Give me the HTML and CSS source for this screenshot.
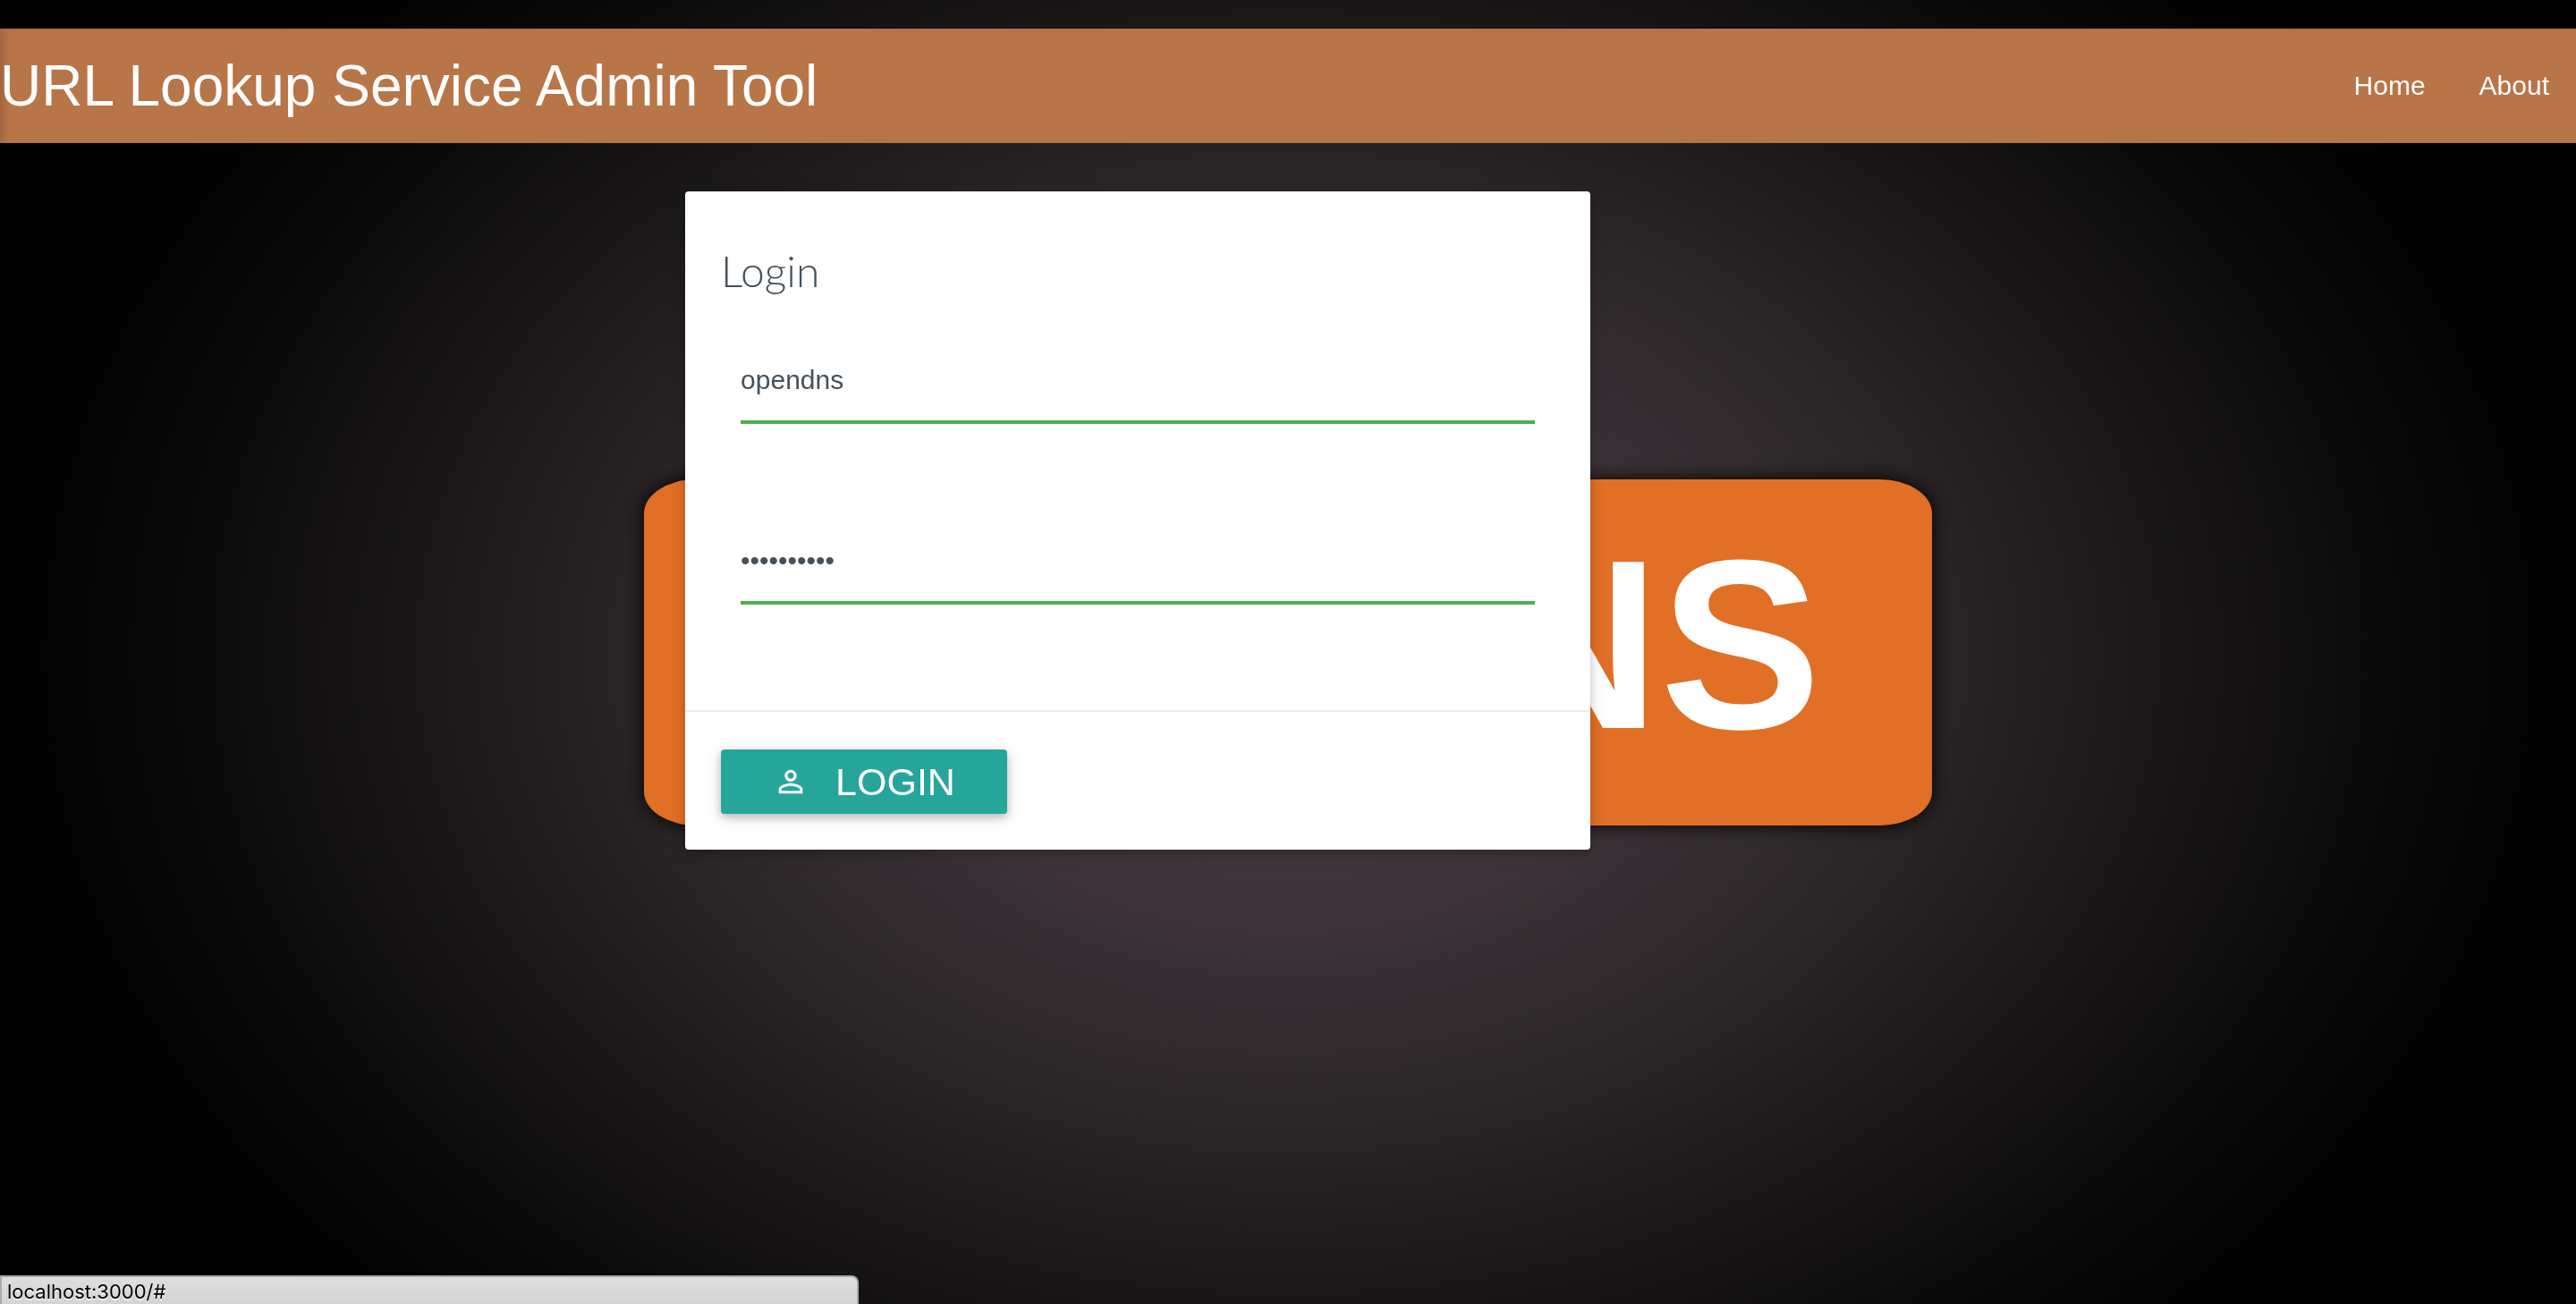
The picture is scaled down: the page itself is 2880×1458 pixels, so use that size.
FILE: index.html
```html
<!DOCTYPE html>
<html lang="en">
<head>
<meta charset="utf-8">
<title>URL Lookup Service Admin Tool</title>
<link rel="stylesheet" href="styles.css">
</head>
<body>
<div class="backdrop" aria-hidden="true">
  <div class="brand">DNS</div>
</div>
<header class="navbar">
  <h1 class="navbar-title">URL Lookup Service Admin Tool</h1>
  <nav class="navbar-links">
    <a href="#">Home</a>
    <a href="#">About</a>
  </nav>
</header>
<main class="page">
  <form class="card">
    <div class="card-content">
      <h2 class="card-title">Login</h2>
      <div class="fields">
        <input class="field" type="text" aria-label="Username" value="opendns">
        <input class="field" type="password" aria-label="Password" value="password12">
      </div>
    </div>
    <div class="card-action">
      <button class="btn" type="button">
        <svg class="btn-icon" viewBox="0 0 24 24" aria-hidden="true"><path fill="currentColor" d="M12 5.9c1.16 0 2.1.94 2.1 2.1s-.94 2.1-2.1 2.1S9.9 9.16 9.9 8s.94-2.1 2.1-2.1m0 9c2.97 0 6.1 1.46 6.1 2.1v1.1H5.9V17c0-.64 3.13-2.1 6.1-2.1M12 4C9.79 4 8 5.79 8 8s1.79 4 4 4 4-1.79 4-4-1.79-4-4-4zm0 9c-2.67 0-8 1.34-8 4v3h16v-3c0-2.66-5.33-4-8-4z"/></svg>
        <span>LOGIN</span>
      </button>
    </div>
  </form>
</main>
<div class="status">localhost:3000/#</div>
</body>
</html>
```
FILE: styles.css
```css
* { box-sizing: border-box; }

body {
  margin: 0;
  min-height: 100vh;
  padding-top: 32px;
  font-family: "Liberation Sans", Arial, sans-serif;
  font-size: 30px;
  color: #455059;
  background: #000;
}

.backdrop {
  position: fixed;
  inset: 0;
  z-index: -1;
  display: flex;
  align-items: center;
  justify-content: center;
  background: radial-gradient(ellipse 1520px 1120px at center, #463c42 0%, #3d3238 28%, #342d31 36%, #292426 49%, #1a1719 64%, #0b0a0b 80%, #000 97%);
}

.brand {
  width: 50%;
  height: 387px;
  padding-right: 124px;
  border-radius: 58px / 38px;
  background: #e26f26;
  box-shadow: 0 0 20px #000;
  color: #fff;
  font-size: 270px;
  font-weight: bold;
  line-height: 370px;
  text-align: right;
  white-space: nowrap;
}

.navbar {
  display: flex;
  align-items: center;
  justify-content: space-between;
  height: 128px;
  background: #b87548;
  box-shadow: inset 8px 0 8px -4px rgba(0, 0, 0, .15);
  color: #fff;
}

.navbar-title {
  margin: 0;
  font-size: 64px;
  font-weight: normal;
}

.navbar-links { display: flex; }

.navbar-links a {
  padding: 0 30px;
  color: #fff;
  text-decoration: none;
}

.page { padding-top: 54px; }

.card {
  width: 35.14%;
  margin-left: 26.6%;
  border-radius: 4px;
  background: #fff;
  box-shadow: 0 4px 10px rgba(0, 0, 0, .16), 0 4px 20px rgba(0, 0, 0, .12);
}

.card-content { padding: 40px 40px 118px; }

.card-title {
  margin: 0;
  font-family: Lato, sans-serif;
  font-size: 48px;
  font-weight: 300;
  line-height: 98px;
}

.fields {
  display: grid;
  gap: 112px;
  padding: 32px 22px 0;
}

.field {
  width: 100%;
  height: 90px;
  padding: 0 0 4px;
  border: 0;
  border-bottom: 4px solid #4caf50;
  outline: 0;
  background: transparent;
  color: inherit;
  font: inherit;
}

.card-action {
  padding: 42px 40px 40px;
  border-top: 2px solid #ebebeb;
}

.btn {
  display: flex;
  align-items: center;
  gap: 30px;
  height: 72px;
  padding: 0 58px;
  border: 0;
  border-radius: 4px;
  background: #26a69a;
  box-shadow: 0 4px 10px rgba(0, 0, 0, .2), 0 4px 20px rgba(0, 0, 0, .12);
  color: #fff;
  font: inherit;
  font-size: 43px;
}

.btn-icon {
  width: 40px;
  height: 40px;
}

.status {
  position: fixed;
  left: 0;
  bottom: 0;
  width: 960px;
  height: 32px;
  padding-left: 6px;
  border: 2px solid #aaa;
  border-bottom: 0;
  border-radius: 0 8px 0 0;
  background: linear-gradient(#dedede, #d4d4d4);
  color: #000;
  font-family: Inter, sans-serif;
  font-size: 22px;
  line-height: 32px;
  text-shadow: 0 2px 0 #eee;
}
```
